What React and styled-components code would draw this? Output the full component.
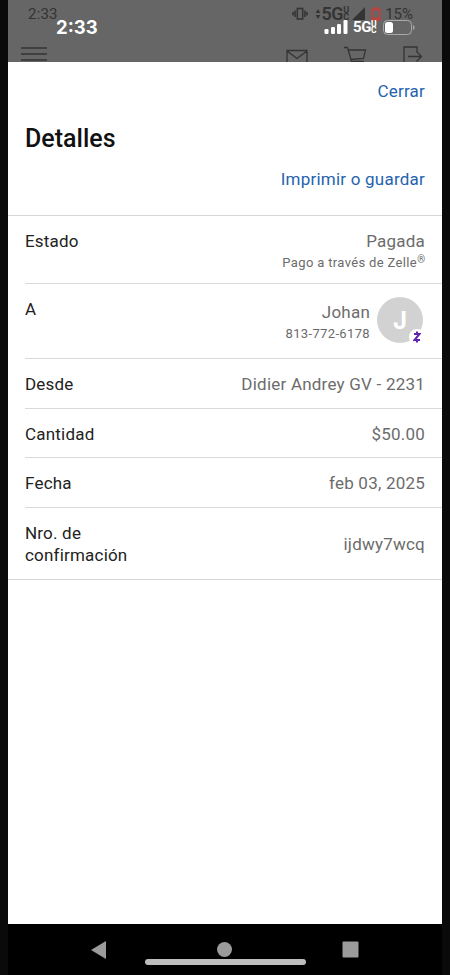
import React from 'react';
import styled, { createGlobalStyle } from 'styled-components';

const GlobalStyle = createGlobalStyle`
  * { box-sizing: border-box; }
  body {
    margin: 0;
    background: #0a0a0a;
    font-family: Roboto, sans-serif;
  }
`;

const Phone = styled.div`
  display: flex;
  flex-direction: column;
  width: 450px;
  height: 975px;
  padding: 0 8px;
  background: #0a0a0a;
  overflow: hidden;
`;

const Backdrop = styled.header`
  position: relative;
  flex: 0 0 62px;
  height: 62px;
  overflow: hidden;
  background: #666;
  color: #343434;
`;

const AndroidStatus = styled.div`
  display: flex;
  justify-content: space-between;
  align-items: center;
  height: 27px;
  padding: 0 29px 0 20px;
  font-size: 15px;
`;

const StatusIcons = styled.div`
  display: flex;
  align-items: center;
`;

const Icon = styled.svg`
  flex: none;
  fill: ${({ $fill }) => $fill || 'none'};
  stroke: ${({ $stroke }) => $stroke || 'none'};
  margin-left: ${({ $left }) => $left || 0}px;
  margin-right: ${({ $right }) => $right || 0}px;
`;

const AndroidTime = styled.span`
  padding-top: 1px;
  letter-spacing: 0.2px;
`;

const Network = styled.span`
  margin-left: ${({ $gap }) => $gap || 0}px;
  font-size: ${({ $size }) => $size}px;
  font-weight: ${({ $weight }) => $weight || 600};
  letter-spacing: -0.4px;
`;

const Stack = styled.span`
  display: flex;
  flex-direction: column;
  width: 7px;
  font-size: ${({ $size }) => $size}px;
  font-weight: 700;
  line-height: ${({ $line }) => $line}px;
`;

const IosStatus = styled.div`
  position: absolute;
  inset: 16px 27px auto 48px;
  display: flex;
  justify-content: space-between;
  align-items: center;
  height: 22px;
  color: #fff;
`;

const IosTime = styled.span`
  font-family: Inter, sans-serif;
  font-size: 18.5px;
  font-weight: 700;
`;

const AppBar = styled.div`
  display: flex;
  justify-content: space-between;
  padding: 18px 19px 0 13px;
`;

const AppIcons = styled.div`
  display: flex;
`;

const Sheet = styled.main`
  flex: 1;
  background: #fff;
`;

const SheetTop = styled.div`
  display: flex;
  flex-direction: column;
  height: 154px;
  padding: 19px 17px 0 17px;
  border-bottom: 1px solid #d6d6d6;
`;

const Link = styled.a`
  align-self: flex-end;
  color: #2563ae;
  font-size: 17px;
  line-height: 20px;
  letter-spacing: 0.22px;
`;

const Title = styled.h1`
  margin: 22px 0 15px;
  color: #111;
  font-size: 25px;
  font-weight: 500;
  line-height: 31px;
`;

const List = styled.dl`
  margin: 0;
  border-bottom: 1px solid #d6d6d6;
`;

const Row = styled.div`
  display: flex;
  justify-content: space-between;
  align-items: flex-start;
  height: ${({ $height }) => $height}px;
  margin-left: 17px;
  padding: 14px 17px 0 0;
  border-bottom: ${({ $last }) => ($last ? 0 : '1px solid #d9d9d9')};
`;

const Label = styled.dt`
  max-width: 120px;
  color: #222;
  font-size: 17px;
  line-height: 22px;
  letter-spacing: 0.2px;
`;

const Value = styled.dd`
  margin: ${({ $top }) => $top || 0}px 0 0;
  color: #6c6c6c;
  font-size: 17px;
  line-height: 22px;
  letter-spacing: 0.22px;
  text-align: right;
`;

const Note = styled.div`
  padding-top: 1px;
  font-size: 13px;
  line-height: 20px;
  letter-spacing: 0.35px;
  sup {
    font-size: 10px;
    line-height: 0;
    vertical-align: 4px;
    letter-spacing: 0;
  }
`;

const Payee = styled.div`
  display: flex;
  gap: 7px;
  padding-right: 2px;
`;

const Avatar = styled.div`
  position: relative;
  width: 46px;
  height: 46px;
  margin-top: -1px;
  border-radius: 50%;
  background: #d2d2d2;
  color: #fff;
  font: 700 24px/48px Inter, sans-serif;
  text-align: center;
`;

const ZelleBadge = styled.span`
  position: absolute;
  right: -2px;
  bottom: -2px;
  display: flex;
  align-items: center;
  justify-content: center;
  width: 16px;
  height: 16px;
  border-radius: 50%;
  background: #fff;
`;

const NavBar = styled.nav`
  position: relative;
  flex: 0 0 51px;
  display: flex;
  justify-content: space-between;
  padding: 17px 83px 0 83px;
  background: #000;
`;

const HomeIndicator = styled.div`
  position: absolute;
  left: 137px;
  top: 35px;
  width: 161px;
  height: 6px;
  border-radius: 3px;
  background: #bdbdbd;
`;

const rows = [
  { label: 'Desde', value: 'Didier Andrey GV - 2231', height: 50 },
  { label: 'Cantidad', value: '$50.00', height: 49 },
  { label: 'Fecha', value: 'feb 03, 2025', height: 50 },
];

const StatusBars = () => (
  <>
    <AndroidStatus>
      <AndroidTime>2:33</AndroidTime>
      <StatusIcons>
        <Icon width="16" height="14" viewBox="0 0 16 14" $stroke="currentColor" strokeWidth="1.6">
          <rect x="5.3" y="1.5" width="5.4" height="10.5" />
          <path d="M3 3.5v6.5M13 3.5v6.5M1 5v3.5M15 5v3.5" />
        </Icon>
        <Icon width="6" height="12" viewBox="0 0 6 12" $fill="currentColor" $left={7}>
          <path d="M3 1l2.3 4H.7zM3 11l2.3-4H.7z" />
        </Icon>
        <Network $size={18}>5G</Network>
        <Stack $size={9} $line={7}><span>U</span><span>C</span></Stack>
        <Icon width="13" height="13" viewBox="0 0 13 13" $fill="currentColor" $left={2}>
          <path d="M13 0v13H0z" />
        </Icon>
        {/* low battery */}
        <Icon width="10" height="14" viewBox="0 0 10 14" $stroke="#bd413d" strokeWidth="1.8" $left={6} $right={4}>
          <path d="M1.2 2.5h7.6v10.5H1.2zM3 1.2h4M1.5 11.5h7" />
        </Icon>
        <span>15%</span>
      </StatusIcons>
    </AndroidStatus>
    <AppBar>
      <Icon width="26" height="20" viewBox="0 0 26 20" $stroke="currentColor" strokeWidth="1.5">
        <path d="M0 3h26M0 9h26M0 15h26" />
      </Icon>
      <AppIcons>
        <Icon width="23" height="20" viewBox="0 0 23 20" $stroke="currentColor" strokeWidth="1.3">
          <path d="M1 5.5h20V20H1zM1 6l10 7.5L21 6" />
        </Icon>
        <Icon width="24" height="20" viewBox="0 0 24 20" $stroke="currentColor" strokeWidth="1.3" $left={35}>
          <path d="M0 2.5h3.5l4 14H20M4.5 5h17l-2 8.5-13 1" />
        </Icon>
        <Icon width="20" height="20" viewBox="0 0 20 20" $stroke="currentColor" strokeWidth="1.3" $left={35}>
          <path d="M14 7V2H1v18h13M5 11.5h13.5M13.5 6.5l5 5-5 5" />
        </Icon>
      </AppIcons>
    </AppBar>
    <IosStatus>
      <IosTime>2:33</IosTime>
      <StatusIcons>
        <Icon width="24" height="15" viewBox="0 0 24 15" $fill="currentColor">
          <rect x="0.5" y="9" width="4" height="5" rx="1.3" />
          <rect x="7" y="7" width="4" height="7" rx="1.3" />
          <rect x="13" y="4" width="4" height="10" rx="1.3" />
          <rect x="19.5" y="0" width="4" height="14" rx="1.3" />
        </Icon>
        <Network $size={15} $gap={5} $weight={700}>5G</Network>
        <Stack $size={8.5} $line={6.5}><span>U</span><span>C</span></Stack>
        <Icon width="32" height="15" viewBox="0 0 32 15" $left={5}>
          <rect x="0.5" y="0.5" width="28" height="14" rx="4" stroke="#a9a9a9" />
          <rect x="2" y="2" width="8" height="11" rx="2.5" fill="#fff" />
          <path d="M30 5c2 .8 2 4.2 0 5z" fill="#a9a9a9" />
        </Icon>
      </StatusIcons>
    </IosStatus>
  </>
);

const App = () => (
  <>
    <GlobalStyle />
    <Phone>
      <Backdrop>
        <StatusBars />
      </Backdrop>
      <Sheet>
        <SheetTop>
          <Link>Cerrar</Link>
          <Title>Detalles</Title>
          <Link>Imprimir o guardar</Link>
        </SheetTop>
        <List>
          <Row $height={68}>
            <Label>Estado</Label>
            <Value>
              Pagada
              <Note>Pago a través de Zelle<sup>®</sup></Note>
            </Value>
          </Row>
          <Row $height={75}>
            <Label>A</Label>
            <Payee>
              <Value $top={3}>
                Johan
                <Note>813-772-6178</Note>
              </Value>
              <Avatar>
                J
                <ZelleBadge>
                  <Icon width="8" height="12" viewBox="0 0 8 12" $stroke="#5f22b5" strokeWidth="2">
                    <path d="M1 3h5.5L1.5 9H7M4 .5V3M4 9v2.5" />
                  </Icon>
                </ZelleBadge>
              </Avatar>
            </Payee>
          </Row>
          {rows.map(({ label, value, height }) => (
            <Row key={label} $height={height}>
              <Label>{label}</Label>
              <Value>{value}</Value>
            </Row>
          ))}
          <Row $height={71} $last>
            <Label>Nro. de confirmación</Label>
            <Value $top={11}>ijdwy7wcq</Value>
          </Row>
        </List>
      </Sheet>
      <NavBar>
        <Icon width="15" height="18" viewBox="0 0 15 18" $fill="#9b9b9b"><path d="M15 0v18L0 9z" /></Icon>
        <Icon width="16" height="18" viewBox="0 0 16 18" $fill="#9b9b9b"><circle cx="8.5" cy="8.5" r="7.5" /></Icon>
        <Icon width="17" height="18" viewBox="0 0 17 18" $fill="#9b9b9b"><rect x="0.5" y="0.5" width="16" height="16" rx="1" /></Icon>
        <HomeIndicator />
      </NavBar>
    </Phone>
  </>
);

export default App;
